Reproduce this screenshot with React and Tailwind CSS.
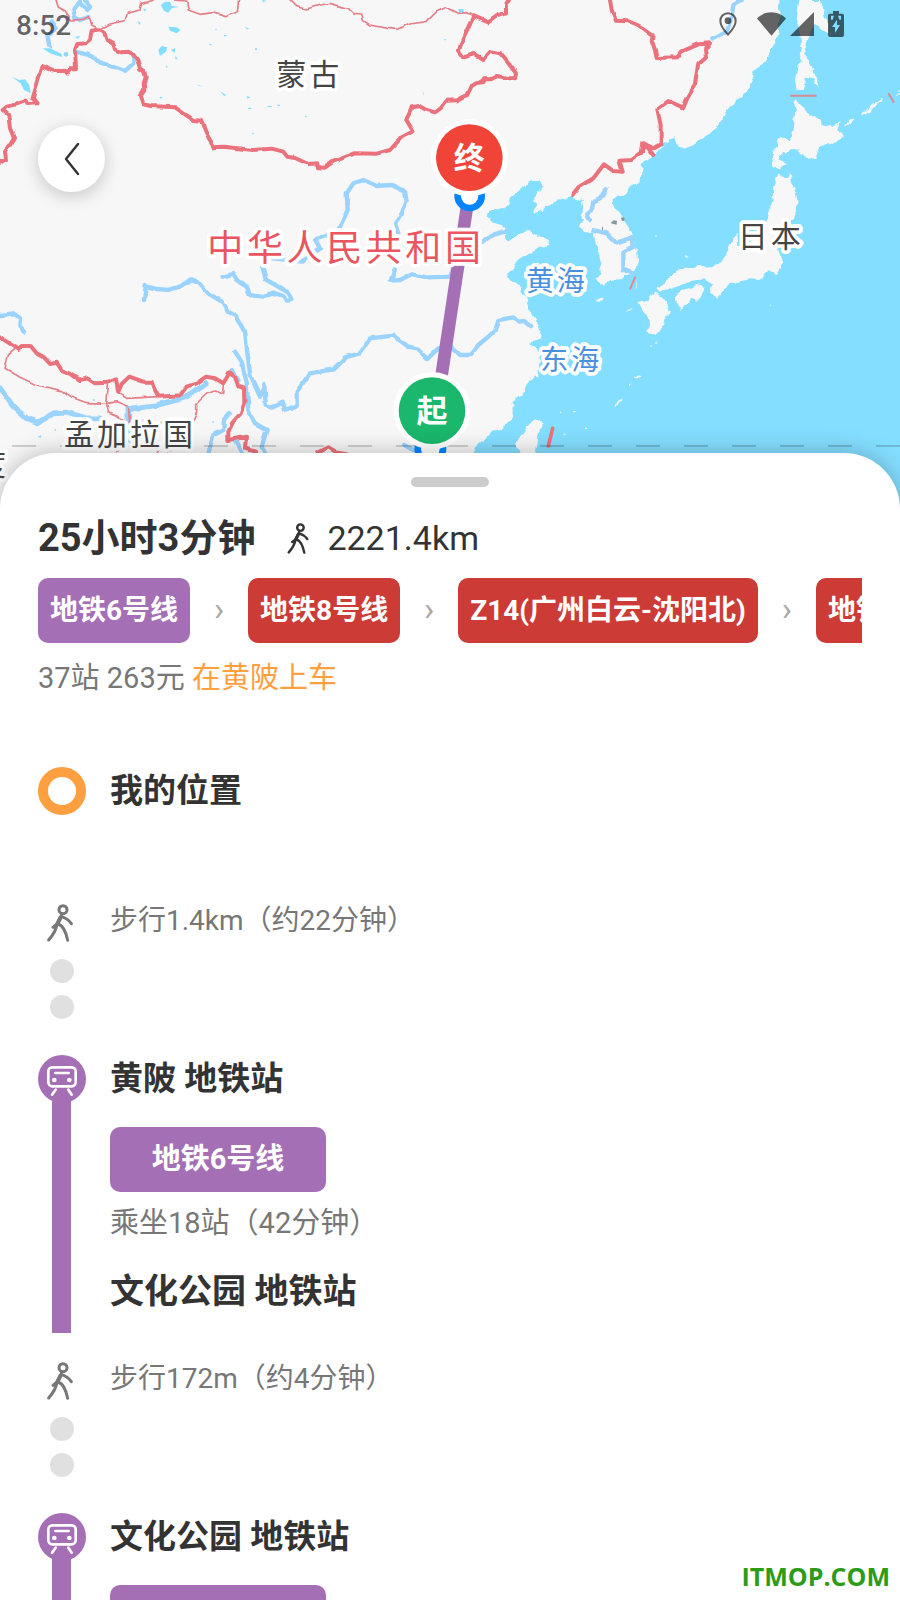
import React from "react";

const lines = [
  { name: "地铁6号线", color: "bg-[#a56fb6]" },
  { name: "地铁8号线", color: "bg-[#cc3b36]" },
  { name: "Z14(广州白云-沈阳北)", color: "bg-[#cc3b36]" },
  { name: "地铁2号线", color: "bg-[#cc3b36]" },
];

const thickBorders = [
  "M0 488L18 478 15 455 30 435 42 415 30 385 25 345 8 330 20 320 48 314 80 302 85 312 110 310 98 295 127 198 162 213 195 212 202 220 212 208 228 208 225 150 232 132 255 130 270 118 275 92 300 88 312 95 320 120 340 132 345 148 365 157 385 155 398 162 412 180 420 205 433 215 437 232 431 250 433 268 422 285 430 312 455 318 525 322 580 360 603 362 625 415 642 442 670 440 760 450 815 446 850 455 862 470 885 474 925 492 955 490 957 502 975 503 1000 485 1065 460 1130 461 1170 450 1205 412 1240 394 1218 358 1235 322 1258 318 1275 328 1305 337 1325 322 1340 302 1372 301 1402 285 1415 258 1428 250 1450 247 1455 238 1470 238 1490 228 1530 235 1545 235 1548 220 1525 190 1500 160 1470 153 1448 177 1422 162 1392 172 1377 152 1385 125 1420 48 1465 67 1495 45 1518 38 1518 15 1527 0",
  "M1830 0L1835 30 1848 62 1885 64 1912 75 1930 85 1958 105 1955 120 1965 150 1970 174 2032 172 2045 155 2095 133 2130 130 2115 145 2118 170 2095 190 2090 220 2085 255 2062 295 2050 323 2005 303 1972 328 1982 375 1982 432 1960 445 1930 430 1925 458 1895 480 1858 482 1868 515 1840 513 1812 493 1780 535 1735 562 1717 585",
  "M1932 430L1960 465",
  "M0 1012L25 1028 58 1050 65 1038 92 1038 110 1060 130 1070 150 1092 170 1088 185 1110 210 1120 240 1140 262 1135 285 1150 325 1148 348 1138 355 1175 365 1152 388 1130 430 1145 455 1145 460 1160 475 1190 540 1186 560 1160 590 1150 618 1130 645 1135 670 1150 688 1120 705 1130 715 1160 732 1165 733 1210 722 1240 700 1265 685 1295 685 1320 738 1310 735 1345 765 1355",
  "M955 1358L985 1342 1005 1354 1040 1360",
];

const thinBorders = [
  "M168 0L175 22 195 32 215 60 250 58 268 50 275 75 300 88 330 72 375 62 382 40 420 30 425 10 460 0",
  "M510 0L560 3 565 30 600 43 640 38 680 50 712 35 716 0",
  "M870 0L890 20 920 27 960 15 990 10 1045 25 1060 40 1085 42 1090 62 1110 75 1160 85 1195 88 1230 72 1280 65 1310 35 1340 22 1375 40 1400 38 1420 48",
  "M45 1048L25 1065 15 1105 60 1132 110 1155 185 1172 210 1190 260 1208 320 1210 325 1155",
  "M320 1210L325 1235 350 1245 385 1270M320 1210L350 1205 385 1220 390 1280",
  "M350 1175L380 1195 475 1190",
  "M670 1150L668 1180 650 1170 620 1182 590 1210 590 1235 575 1270",
  "M350 1355L365 1345M425 1265L460 1268M480 1268L515 1270M475 1358L492 1330 503 1358 525 1352",
];

const straits = "M2370 287H2450M2665 280L2682 308M1906 830L1890 868";

const rivers = [
  "M228 155L262 163 300 187 375 213 400 190 400 165",
  "M255 0L270 18 262 30 240 10M240 5L220 30 225 52 240 60 268 50",
  "M155 62L170 85 142 105 148 140",
  "M1195 700L1185 670 1205 640 1220 605 1215 575 1175 555 1130 558 1090 540 1060 550 1040 580 1043 630 1015 690 980 708 945 718 960 745 940 755 905 785 820 775",
  "M787 800L797 838 865 878 877 900 858 902 850 888 820 878 785 890 750 885 740 860 715 845 700 822 668 830",
  "M1185 805L1172 842 1200 840 1235 822 1280 832 1350 830 1380 760 1445 730 1480 705 1520 692",
  "M432 900L437 858 470 867 505 870 540 860 572 838 600 850 625 880 665 905 685 935 710 950 735 995 742 1060 752 1130 780 1190 793 1155 797 1215 815 1220 848 1205 855 1230 890 1215 890 1175 930 1120 1000 1108 1035 1072 1080 1060 1110 1015 1180 1007 1225 1040 1250 1045 1282 1077 1315 1045 1355 1040 1380 1065 1410 1065 1435 1035 1465 1010 1485 990 1495 960 1540 952 1555 965 1575 963 1593 978",
  "M705 1055L725 1085 740 1150 745 1230 765 1270 800 1290 785 1340 795 1360",
  "M695 1110L715 1140M690 1242L672 1262 670 1290 640 1305 625 1360M705 1320L725 1360",
  "M0 945L40 940 60 955 58 980 72 995",
  "M1212 1335L1240 1350",
  "M2225 0L2200 15 2195 50 2180 95 2140 118",
  "M1820 565L1810 590 1780 605 1775 630 1762 645 1770 660",
  "M1780 690L1820 700 1850 730 1895 715 1898 740 1870 755 1870 808 1898 820",
];

const wideRivers = [
  "M385 1230L400 1225 470 1215 530 1200 570 1185 620 1150M385 1225V1320",
  "M0 1165L40 1220 80 1255 115 1267 160 1240 200 1238 260 1255 300 1255",
];

const land = [
  // mainland and Korea
  "M0 0H2335L2340 60 2325 130 2290 180 2265 215 2240 275 2200 315 2170 350 2145 385 2110 415 2085 432 2055 443 2030 433 2022 412 2005 420 1990 440 1960 465 1940 480 1925 500 1922 540 1895 560 1870 580 1838 598 1840 625 1865 645 1890 685 1905 720 1912 760 1914 780 1905 812 1898 825 1880 822 1870 840 1840 842 1815 845 1805 858 1790 835 1800 825 1795 815 1805 790 1795 760 1790 740 1780 700 1750 690 1738 680 1750 660 1740 650 1750 625 1745 600 1715 592 1680 598 1650 615 1625 632 1595 642 1612 618 1598 605 1620 575 1634 558 1620 543 1590 543 1575 560 1555 575 1530 595 1522 618 1500 628 1470 628 1460 650 1475 668 1505 675 1522 690 1515 715 1525 722 1560 700 1590 695 1608 710 1647 712 1645 735 1605 748 1555 778 1540 805 1520 828 1555 850 1572 885 1585 930 1608 958 1612 985 1625 1010 1622 1018 1590 1028 1612 1050 1625 1070 1618 1090 1615 1125 1590 1140 1575 1175 1550 1195 1535 1210 1540 1250 1515 1280 1480 1295 1450 1325 1420 1345 1410 1380 1300 1560H0Z",
  // Sakhalin
  "M2398 0H2460L2470 40 2490 95 2498 115 2480 90 2440 75 2428 110 2415 150 2418 175 2435 200 2440 220 2455 238 2452 262 2440 235 2415 230 2405 265 2393 268 2388 240 2395 200 2405 150 2400 100 2390 60Z",
  // Hokkaido
  "M2390 298L2410 325 2435 350 2475 375 2500 380 2522 362 2515 390 2532 415 2500 425 2460 440 2448 482 2410 462 2380 450 2355 455 2335 470 2360 495 2335 510 2320 500 2315 460 2325 440 2340 415 2370 420 2382 390 2385 340 2380 310Z",
  // Honshu
  "M2335 520L2355 535 2370 515 2372 545 2390 575 2396 610 2385 640 2370 670 2350 700 2335 735 2340 755 2350 790 2325 825 2310 810 2295 825 2275 840 2250 838 2220 845 2195 845 2180 865 2155 898 2130 875 2140 850 2120 838 2090 840 2060 845 2030 860 2005 870 1975 875 1968 865 2000 840 2040 808 2090 802 2140 798 2162 795 2180 765 2195 730 2200 715 2212 705 2215 740 2250 730 2290 680 2305 640 2318 600 2320 560Z",
  // Shikoku, Kyushu, Taiwan
  "M2030 880L2055 870 2090 855 2110 860 2108 885 2090 905 2070 898 2045 930 2032 910Z",
  "M1915 905L1945 900 1962 878 1990 890 2008 920 2000 955 1985 980 1968 1005 1942 995 1950 970 1940 945 1925 925Z",
  "M1610 1258L1625 1268 1615 1310 1605 1370H1555L1552 1325 1575 1290 1595 1265Z",
  // Jeju and smaller islands
  "M1786 902L1800 895 1815 898 1808 907 1792 909Z",
  "M2530 388L2550 355 2568 353 2555 365ZM2585 350L2610 315 2655 296 2650 304 2620 320 2595 345ZM2684 290L2702 272 2702 280Z",
  "M1882 935L1900 920 1895 930ZM1903 866L1913 842 1911 855ZM1965 1035L1973 1020 1970 1034ZM1951 1037L1958 1042 1952 1043Z",
  "M1845 1218L1855 1202 1868 1195 1862 1205 1848 1225ZM1903 1132L1920 1123 1922 1126 1908 1134Z",
  "M1678 1238H1684V1242H1678ZM1720 1230H1727V1234H1720ZM1690 1298H1700V1301H1690ZM1752 1280H1758V1284H1752ZM1890 1151H1895V1157H1890ZM1966 706H1970V710H1966ZM2054 766H2062V770H2054ZM2310 914H2313V917H2310Z",
];

const lakes = [
  "M482 15L495 5 510 5 515 18 538 20 515 25 505 38 492 32Z",
  "M505 80L530 82 542 90 530 100 510 92Z",
  "M475 150L485 138 502 142 498 155 480 168Z",
  "M512 150L525 145 525 158ZM525 168L533 175 527 179ZM412 62L422 68 418 75ZM430 25L440 30 432 34Z",
  "M128 145L150 145 185 162 186 172 150 160Z",
  "M35 230L58 240 75 238 88 255 92 280 72 270 62 250Z",
  "M225 110L242 108 232 117ZM735 80L748 86 740 88ZM670 104L681 106 675 110ZM660 274L680 286 672 287ZM740 288L752 292 742 296ZM583 252L598 256 610 262ZM478 290L488 292 483 297ZM785 0L800 2 790 7Z",
  "M802 318H815V321H802ZM832 314H840V318H832ZM745 323H754V327H745ZM757 399H762V403H757ZM915 348H920V351H915ZM646 86H650V90H646ZM1333 117H1338V121H1333ZM765 145H771V150H765ZM628 132H635V136H628ZM1268 278L1271 276 1270 288ZM497 195L504 202 499 203Z",
  "M1375 27L1390 27 1392 36 1378 40ZM112 1310L124 1306 122 1313ZM278 1198H284V1202H278ZM164 1288H168V1292H164ZM637 1264H642V1268H637Z",
];

const labels = [
  { text: "蒙古", x: 829, y: 255, style: "text-[90px] fill-[#444444]" },
  { text: "日本", x: 2213, y: 741, style: "text-[90px] fill-[#444444]" },
  { text: "孟加拉国", x: 192, y: 1334, style: "text-[90px] fill-[#444444]" },
  { text: "度", x: -72, y: 1425, style: "text-[90px] fill-[#444444]" },
  { text: "中华人民共和国", x: 622, y: 783, style: "text-[108px] fill-[#e9565f]" },
  { text: "黄海", x: 1578, y: 874, style: "text-[84px] fill-[#4a90dc]" },
  { text: "东海", x: 1621, y: 1109, style: "text-[84px] fill-[#4a90dc]" },
];

const Pin = ({ x, y, text, color }) => (
  <g>
    <circle cx={x} cy={y} r="116" fill="#fff" />
    <circle cx={x} cy={y} r="100" fill={color} />
    <text x={x} y={y + 33} textAnchor="middle" className="text-[93px] font-bold fill-white">
      {text}
    </text>
  </g>
);

const RouteMap = () => (
  <svg
    className="block h-[520px] w-full shrink-0 bg-[#84deff]"
    viewBox="0 0 2700 1560"
    preserveAspectRatio="xMidYMin slice"
    role="img"
    aria-label="路线地图"
  >
    <defs>
      <filter id="coast" x="0" y="0" width="2700" height="1560" filterUnits="userSpaceOnUse" colorInterpolationFilters="sRGB">
        <feTurbulence type="fractalNoise" baseFrequency="0.035" numOctaves="2" seed="4" />
        <feDisplacementMap in="SourceGraphic" scale="22" xChannelSelector="R" yChannelSelector="G" />
      </filter>
      <filter id="rough" x="0" y="0" width="2700" height="1560" filterUnits="userSpaceOnUse" colorInterpolationFilters="sRGB">
        <feTurbulence type="fractalNoise" baseFrequency="0.03" numOctaves="1" seed="9" />
        <feDisplacementMap in="SourceGraphic" scale="13" xChannelSelector="R" yChannelSelector="G" />
      </filter>
    </defs>
    <g filter="url(#coast)">
      <rect x="-20" y="-20" width="200" height="1600" fill="#f7f7f7" />
      <rect x="-20" y="-20" width="2300" height="60" fill="#f7f7f7" />
      <path d={land.join("")} fill="#f7f7f7" />
    </g>
    <path d={lakes.join("")} fill="#84deff" />
    <g fill="none" strokeLinejoin="round" strokeLinecap="round" filter="url(#rough)">
      <path d={rivers.join("")} stroke="#9bd3ff" strokeWidth="13" />
      <path d={wideRivers.join("")} stroke="#9bd3ff" strokeWidth="17" />
      <path d={thinBorders.join("")} stroke="#e67f88" strokeWidth="5" />
      <path d={thickBorders.join("")} stroke="#ea727c" strokeWidth="12" />
    </g>
    <path d={straits} stroke="#d98b98" strokeWidth="6" />
    <path d="M1658 1285L1645 1338" stroke="#ea727c" strokeWidth="11" strokeLinecap="round" />
    <circle cx="198" cy="163" r="7" fill="#9bd3ff" />
    <path d="M1832 670L1840 661 1851 662 1850 674ZM1863 653L1873 652 1874 661 1866 664ZM1806 680H1809V690H1806Z" fill="#8d989c" />
    <path d="M36 1338H2700" stroke="#000" strokeOpacity="0.22" strokeWidth="5" strokeDasharray="72 72" />

    <path d="M1407 580L1291 1350" stroke="#a56fb6" strokeWidth="38" />
    <circle cx="1409" cy="588" r="36" fill="#fff" stroke="#0084ff" strokeWidth="20" />
    <circle cx="1291" cy="1347" r="38" fill="#fff" stroke="#0084ff" strokeWidth="20" />

    {labels.map((l) => (
      <text
        key={l.text}
        x={l.x}
        y={l.y}
        className={`${l.style} tracking-widest stroke-white stroke-[22px] [paint-order:stroke] [stroke-linejoin:round]`}
      >
        {l.text}
      </text>
    ))}

    <Pin x={1408} y={473} text="终" color="#f04438" />
    <Pin x={1296} y={1232} text="起" color="#1ab76c" />
  </svg>
);

const StatusBar = () => (
  <div className="absolute inset-x-0 top-0 flex h-12 items-center justify-between pl-4 pr-14 text-black/60">
    <span className="pt-1 text-[28px] font-medium">8:52</span>
    <div className="flex h-7 items-center">
      <svg className="mr-5 h-6 w-[18px]" viewBox="0 0 54 72">
        <path d="M27 4C13 4 4 14 4 27c0 16 23 41 23 41s23-25 23-41C50 14 41 4 27 4z" fill="none" stroke="currentColor" strokeWidth="6" />
        <circle cx="27" cy="26" r="10" fill="currentColor" />
      </svg>
      <svg className="mr-1 h-6 w-[29px]" viewBox="0 0 88 72">
        <path d="M44 72L0 19C24-6 64-6 88 19z" fill="currentColor" />
      </svg>
      <svg className="mr-[14px] h-6 w-[24px]" viewBox="0 0 72 72">
        <path d="M72 0V72H0z" fill="currentColor" />
      </svg>
      <svg className="h-[26px] w-4" viewBox="0 0 48 78">
        <path
          fillRule="evenodd"
          fill="currentColor"
          d="M15 0H33V8H42Q48 8 48 14V72Q48 78 42 78H6Q0 78 0 72V14Q0 8 6 8H15ZM9 14V26H14L18 14ZM30 14L34 26H39V14ZM27 26L12 48H21V66L36 42H27Z"
        />
      </svg>
    </div>
  </div>
);

const Walker = ({ className }) => (
  <svg className={className} viewBox="0 0 78 114" fill="none" stroke="currentColor" strokeWidth="9" strokeLinecap="round" strokeLinejoin="round">
    <circle cx="48" cy="17" r="12" />
    <path d="M43 34L30 60L18 70M43 38Q63 44 73 59M30 60Q27 83 5 108M34 60Q54 68 62 109" />
    <path d="M40 42L30 62" strokeWidth="12" />
  </svg>
);

const TrainBadge = () => (
  <svg className="size-12 shrink-0" viewBox="0 0 144 144" fill="none" stroke="#fff" strokeLinecap="round">
    <circle cx="72" cy="72" r="72" fill="#a56fb6" stroke="none" />
    <rect x="31" y="37" width="82" height="57" rx="12" strokeWidth="8" />
    <path d="M52 54H92M53 104L42 119M91 104L101 119" strokeWidth="8" />
    <circle cx="49" cy="75" r="7" fill="#fff" stroke="none" />
    <circle cx="94" cy="75" r="7" fill="#fff" stroke="none" />
  </svg>
);

const WalkLeg = ({ text }) => (
  <li className="flex h-[180px] gap-6 pt-[29px]">
    <div className="flex w-12 flex-col items-center">
      <Walker className="mr-1 h-[38px] w-[26px] shrink-0" />
      <span className="mt-[17px] size-6 rounded-full bg-[#e0e0e0]" />
      <span className="mt-3 size-6 rounded-full bg-[#e0e0e0]" />
    </div>
    <p className="text-[28px] leading-[34px]">{text}</p>
  </li>
);

const RideLeg = ({ from, line, detail, to }) => (
  <li className="flex gap-6">
    <div className="flex w-12 shrink-0 flex-col items-center">
      <TrainBadge />
      <div className="-mt-1 mr-px w-[19px] grow bg-[#a56fb6]" />
    </div>
    <div className="pb-[18px]">
      <h2 className="text-[33px] font-bold leading-[48px] text-[#333333]">{from}</h2>
      <div className="mt-6 h-[65px] w-[216px] rounded-[10px] bg-[#a56fb6] text-center text-[29px] font-bold leading-[65px] text-white">
        {line}
      </div>
      <p className="mt-[6px] text-[29px] leading-[50px]">{detail}</p>
      <h2 className="mt-[19px] text-[34px] font-bold leading-[48px] text-[#333333]">{to}</h2>
    </div>
  </li>
);

const App = () => {
  return (
    <div className="relative flex h-screen flex-col overflow-hidden bg-white font-[Roboto,'Noto_Sans_CJK_SC',sans-serif]">
      <RouteMap />
      <StatusBar />
      <button
        type="button"
        aria-label="返回"
        className="absolute left-[38px] top-[125px] flex size-[67px] items-center justify-center rounded-full bg-white text-[#333333] shadow-[0_4px_18px_rgba(0,0,0,0.2)]"
      >
        <svg className="h-8 w-4" viewBox="0 0 16 32" fill="none" stroke="currentColor" strokeWidth="2.4" strokeLinecap="round" strokeLinejoin="round">
          <path d="M14 1L2 16L14 31" />
        </svg>
      </button>

      <main className="relative -mt-[67px] min-h-0 grow overflow-hidden rounded-t-[56px] bg-white px-[38px] text-[#777777] shadow-[0_0_24px_rgba(0,0,0,0.25)]">
        <div className="mx-auto mt-6 h-[10px] w-[78px] rounded-full bg-[#cccccc]" />

        <div className="mt-[27px] flex h-12 items-center text-[#333333]">
          <h1 className="text-[38px] font-bold leading-[48px]">25小时3分钟</h1>
          <Walker className="ml-8 h-[31px] w-[22px]" />
          <span className="ml-[18px] text-[34px] leading-[48px]">2221.4km</span>
        </div>

        <ul className="mt-4 flex overflow-hidden whitespace-nowrap">
          {lines.map((line, i) => (
            <li key={line.name} className="flex shrink-0">
              {i > 0 && <span className="w-[58px] text-center text-[34px] leading-[62px] text-[#a8a8a8]">›</span>}
              <span className={`h-[65px] rounded-[10px] px-3 text-[28px] font-bold leading-[65px] text-white ${line.color}`}>
                {line.name}
              </span>
            </li>
          ))}
        </ul>

        <p className="mt-3 text-[29px] leading-[46px]">
          37站 263元 <span className="text-[#ff9f40]">在黄陂上车</span>
        </p>

        <ol className="mt-[66px]">
          <li className="flex gap-6 pb-[60px]">
            <span className="size-12 rounded-full border-[10px] border-[#ff9f40]" />
            <h2 className="text-[33px] font-bold leading-[48px] text-[#333333]">我的位置</h2>
          </li>
          <WalkLeg text="步行1.4km（约22分钟）" />
          <RideLeg from="黄陂 地铁站" line="地铁6号线" detail="乘坐18站（42分钟）" to="文化公园 地铁站" />
          <WalkLeg text="步行172m（约4分钟）" />
          <RideLeg from="文化公园 地铁站" line="地铁8号线" detail="" to="" />
        </ol>
      </main>

      <span className="absolute bottom-[6px] right-[10px] font-['Open_Sans',sans-serif] text-[25px] font-bold leading-9 text-[#2c9b1a]">
        ITMOP.COM
      </span>
    </div>
  );
};

export default App;
